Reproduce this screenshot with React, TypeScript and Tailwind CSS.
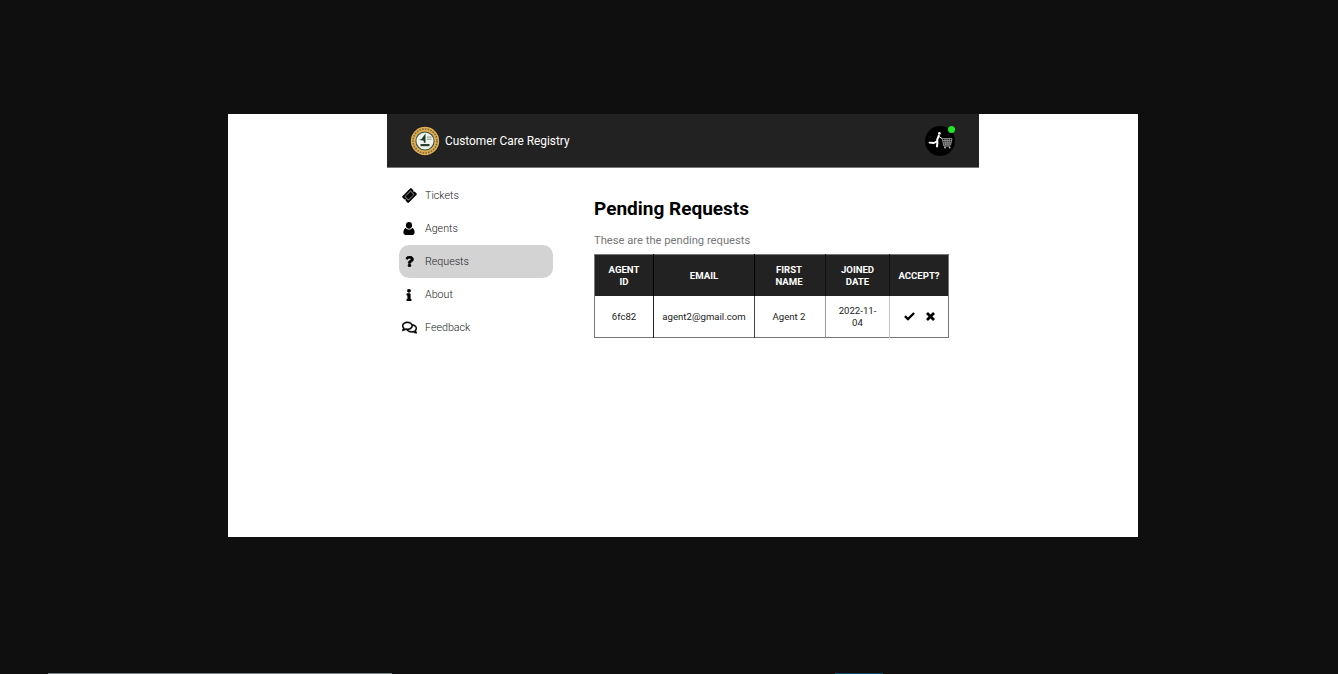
import { FaInfo, FaQuestion, FaRegComments, FaTicketAlt } from "react-icons/fa"

const UserIcon = () => (
  <svg viewBox="0 0 12 14" className="h-[13px] w-[12px]" fill="currentColor">
    <ellipse cx="6" cy="3.6" rx="3.3" ry="3.6" />
    <path d="M2.6 6.4 C3.4 7.6 4.6 8 6 8 C7.4 8 8.6 7.6 9.4 6.4 C11 6.8 12 8.4 12 11.4 C12 13 11 14 9.8 14 H2.2 C1 14 0 13 0 11.4 C0 8.4 1 6.8 2.6 6.4 Z" />
  </svg>
)

const CheckIcon = () => (
  <svg viewBox="0 0 12 10" className="h-[9px] w-[11px]" fill="currentColor">
    <path d="M4.3 9.8 L0 5.5 L1.8 3.7 L4.3 6.2 L10.2 0.2 L12 2 Z" />
  </svg>
)

const CrossIcon = () => (
  <svg viewBox="0 0 10 10" className="size-[9px]" fill="currentColor">
    <path d="M2.2 0 L5 2.8 L7.8 0 L10 2.2 L7.2 5 L10 7.8 L7.8 10 L5 7.2 L2.2 10 L0 7.8 L2.8 5 L0 2.2 Z" />
  </svg>
)

const navItems = [
  { label: "Tickets", icon: <FaTicketAlt className="size-[13px] -rotate-45 stroke-[20]" /> },
  { label: "Agents", icon: <UserIcon /> },
  { label: "Requests", icon: <FaQuestion className="size-[11px] stroke-[30]" />, active: true },
  { label: "About", icon: <FaInfo className="size-[12px] stroke-[20]" /> },
  { label: "Feedback", icon: <FaRegComments className="size-[15px] stroke-[15]" /> },
]

const Logo = () => (
  <svg viewBox="0 0 30 30" className="size-[30px] shrink-0">
    <circle cx="15" cy="15" r="15" fill="#1c1c1c" />
    <circle cx="15" cy="15" r="14.2" fill="#e0ad55" />
    <circle cx="15" cy="15" r="12" fill="none" stroke="#7a6a35" strokeWidth="1.6" strokeDasharray="1.6 1.2" />
    <circle cx="15" cy="15" r="9.6" fill="#33503a" />
    <circle cx="15" cy="15" r="8.6" fill="#eef2ec" />
    <path d="M15.5 7.5 L11.5 13 L9 14 L13.5 14.4 L14 16.8 L15.5 16.8 Z" fill="#1c3a28" />
    <path d="M17 10.5h4.5v1.3H17zM17 12.8h4.5v1.3H17z" fill="#9aa99a" />
    <rect x="10.5" y="18" width="9" height="2.2" fill="#2b4030" />
  </svg>
)

const Cart = () => (
  <svg viewBox="0 0 30 30" className="size-[30px]">
    <circle cx="15" cy="15" r="15" fill="#000" />
    <g fill="none" stroke="#fff" strokeLinecap="round" strokeLinejoin="round">
      <circle cx="14.4" cy="7.4" r="1.3" fill="#fff" stroke="none" />
      <path d="M13.8 9.6 L12.2 13.6 L12.4 17 L12 20.4" strokeWidth="2" />
      <path d="M12.2 15.4 L8.8 17 L4.6 16.6" strokeWidth="1.9" />
      <path d="M13.8 10.4 L16.8 12.4" strokeWidth="1" />
    </g>
    <g fill="none" stroke="#c4c4c4" strokeWidth="0.7">
      <path d="M17.2 12.6 H27 L25.6 19 H18.6 Z" />
      <path d="M17.8 14.7 H26.4 M18.2 16.9 H26 M19.8 12.6 L20.4 19 M22.1 12.6 V19 M24.4 12.6 L23.8 19" />
      <path d="M18.6 19 L19 20.2 H25.4" />
    </g>
    <circle cx="20" cy="21.6" r="0.9" fill="#c4c4c4" />
    <circle cx="24.6" cy="21.6" r="0.9" fill="#c4c4c4" />
  </svg>
)

export default function App() {
  return (
    <div className="flex h-[674px] flex-col overflow-hidden bg-[#0f0f0f] pt-[114px] font-['Roboto',sans-serif]">
      <div className="ml-[228px] h-[423px] w-[910px] bg-white">
        <div className="ml-[159px] w-[592px]">
          <header className="flex h-[54px] items-center justify-between border-b border-[#777] bg-[#222222] pl-[23px] pr-[24px]">
            <div className="flex items-center gap-[5px]">
              <Logo />
              <span className="pt-[2px] text-[11.85px] text-white">Customer Care Registry</span>
            </div>
            <div className="relative">
              <Cart />
              <span className="absolute right-0 top-0 size-[7px] rounded-full bg-[#22e32a]" />
            </div>
          </header>

          <div className="flex">
            <nav className="ml-[12px] mt-[11px] flex w-[154px] shrink-0 flex-col">
              {navItems.map((item) => (
                <div
                  key={item.label}
                  className={`flex h-[33px] items-center rounded-[10px] pl-[2px] text-[10.7px] font-light text-[#222] ${item.active ? "bg-[#d3d3d3]" : ""}`}
                >
                  <span className="flex w-[16px] justify-center text-black">{item.icon}</span>
                  <span className="ml-[8px] pt-[2px]">{item.label}</span>
                </div>
              ))}
            </nav>

            <main className="ml-[41px] w-[355px] shrink-0">
              <h1 className="mt-[29px] text-[19px] leading-[23px] font-bold text-black">Pending Requests</h1>
              <p className="mt-[13px] text-[11.2px] leading-[16px] text-[#777]">These are the pending requests</p>
              <table className="mt-[5px] w-[355px] table-fixed border-collapse border border-[#777] text-center text-[9.6px] leading-[11.5px]">
                <thead>
                  <tr className="h-[41px] bg-[#222222] font-bold text-white">
                    <th className="w-[59px] border-r border-black pt-px">AGENT<br />ID</th>
                    <th className="w-[101px] border-r border-black pt-px">EMAIL</th>
                    <th className="w-[71px] border-r border-[#111] pt-px pr-[2px]">FIRST<br />NAME</th>
                    <th className="w-[64px] border-r border-[#111] pt-px">JOINED<br />DATE</th>
                    <th className="w-[59px] pt-px">ACCEPT?</th>
                  </tr>
                </thead>
                <tbody>
                  <tr className="h-[42px] text-[#222]">
                    <td className="border-r border-[#222] pt-px">6fc82</td>
                    <td className="border-r border-[#444] pt-px">agent2@gmail.com</td>
                    <td className="border-r border-[#999] pt-px pr-[2px]">Agent 2</td>
                    <td className="border-r border-[#c4c4c4] pt-px">2022-11-<br />04</td>
                    <td>
                      <div className="flex items-center justify-center gap-[11px] text-black">
                        <CheckIcon />
                        <CrossIcon />
                      </div>
                    </td>
                  </tr>
                </tbody>
              </table>
            </main>
          </div>
        </div>
      </div>

      <div className="mt-auto flex h-px">
        <div className="ml-[48px] w-[344px] bg-[#7a8383]" />
        <div className="ml-[443px] w-[48px] bg-[#0f4a70]" />
      </div>
    </div>
  )
}
